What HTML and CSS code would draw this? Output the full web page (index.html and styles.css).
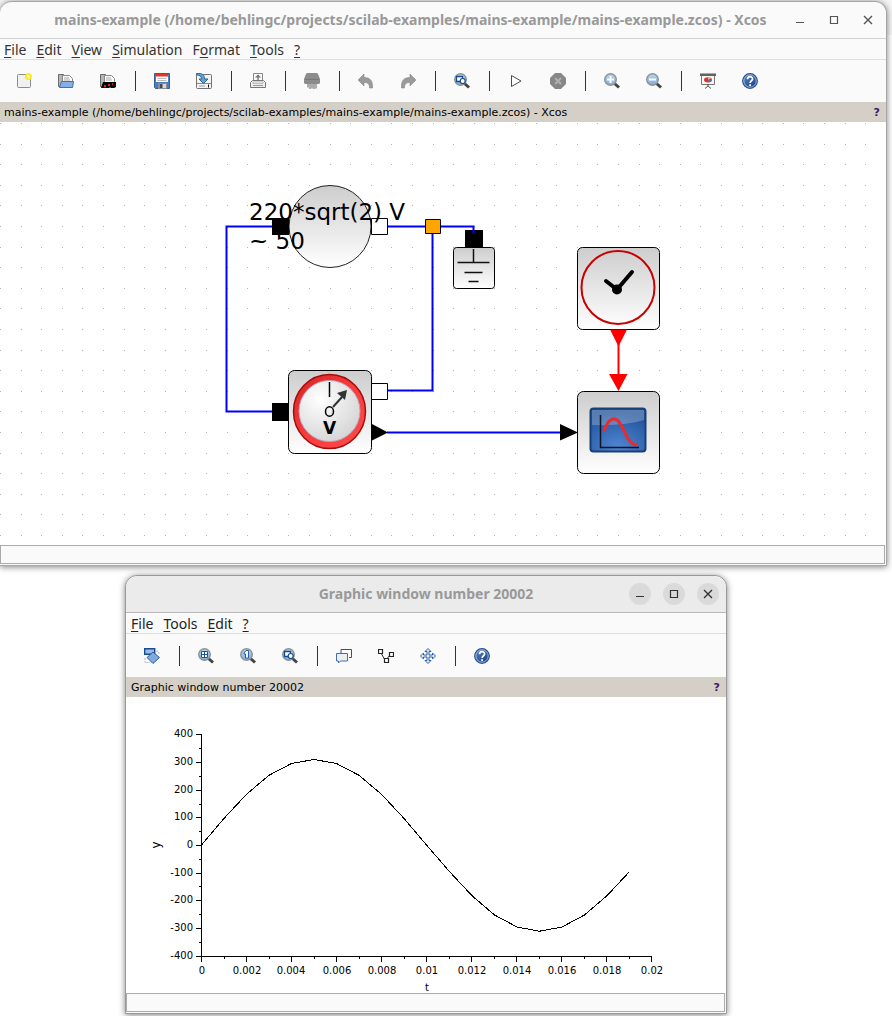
FILE: index.html
```html
<!DOCTYPE html>
<html lang="en">
<head>
<meta charset="utf-8">
<meta name="viewport" content="width=device-width, initial-scale=1">
<title>Xcos mains example</title>
<link rel="stylesheet" href="styles.css">
</head>
<body>
<svg class="sprite" aria-hidden="true">
  <defs>
    <linearGradient id="glass" x1="0" y1="0" x2="0" y2="1"><stop offset="0" stop-color="#b9d3f3"/><stop offset="1" stop-color="#82abde"/></linearGradient>
    <linearGradient id="navy" x1="0" y1="0" x2="1" y2="1"><stop offset="0" stop-color="#5d87c4"/><stop offset="1" stop-color="#123a7d"/></linearGradient>
    <linearGradient id="metal" x1="0" y1="0" x2="0" y2="1"><stop offset="0" stop-color="#cdcdcd"/><stop offset="1" stop-color="#ffffff"/></linearGradient>
  </defs>
  <symbol id="i-new" viewBox="0 0 16 16"><rect x="1.5" y="1.5" width="13" height="13" rx="1" fill="#f1f1f1" stroke="#8c8c8c"/><circle cx="12.5" cy="3.5" r="3.5" fill="#fbea2c"/><circle cx="12.500" cy="3.500" r="1.400" fill="#fffccb"/></symbol>
  <symbol id="i-open" viewBox="0 0 16 16"><path d="M.5 13.500V1.500h5l1 1.500h2v10z" fill="#b5b5b5" stroke="#6c6c6c"/><path d="M4.500 2.500h7l3 3v6h-10z" fill="#fafafa" stroke="#888"/><path d="M6 5h5M6 7h6" stroke="#aaa"/><path d="M3.500 8.500h12l-1 6h-13z" fill="#84b0e3" stroke="#3f70b2"/></symbol>
  <symbol id="i-opensci" viewBox="0 0 16 16"><path d="M.5 13.500V1.500h5l1 1.500h2v10z" fill="#b5b5b5" stroke="#6c6c6c"/><path d="M4.500 2.500h7l3 3v6h-10z" fill="#fafafa" stroke="#888"/><path d="M6 5h5M6 7h6" stroke="#aaa"/><path d="M3 9h13v5l-2 1H1z" fill="#000"/><path d="M4 12h2v2H4zM8 11h2v2H8zM12 10h1v2h-1zM9 14h2v1H9z" fill="#e81e1e"/></symbol>
  <symbol id="i-save" viewBox="0 0 16 16"><path d="M.5.500h15v15h-14l-1-1z" fill="#4a7dc0" stroke="#355f9b"/><path d="M2 1h12v8H2z" fill="#fff"/><path d="M2 1h12v2.500H2z" fill="#e33426"/><path d="M3.500 5.500h9M3.500 7.500h9" stroke="#b9bec5"/><path d="M4 10h9v6H4z" fill="#8b8f94"/><path d="M6 11h2v4H6z" fill="#45494e"/><path d="M9 11h3v4H9z" fill="#d8d8d8"/></symbol>
  <symbol id="i-import" viewBox="0 0 16 16"><rect x=".5" y="1.500" width="15" height="14" rx="1" fill="#f4f4f4" stroke="#737373"/><path d="M1 10.500h14" stroke="#8a8a8a"/><path d="M3 13h6" stroke="#9a9a9a"/><path d="M12.500 11.500v3" stroke="#111"/><path d="M.5.500c6-.5 8 1.500 8 5.500h3.500L7.500 10.500 3 6h2.500C5.500 3.500 4 2 .5 2z" fill="#66a3d1" stroke="#2c658f"/></symbol>
  <symbol id="i-print" viewBox="0 0 16 16"><path d="M3.500 9.500v-9h9v9" fill="#f8f8f8" stroke="#8a8a8a"/><path d="M8 2v5" stroke="#777" stroke-width="1.400"/><path d="M5 4.500L8 1.500l3 3z" fill="#777"/><path d="M.5 14.500v-5l2-2h11l2 2v5z" fill="#eee" stroke="#777"/><path d="M3 9h10v1.500H3z" fill="#fff" stroke="#999" stroke-width=".6"/><path d="M3 12.500h10" stroke="#999"/></symbol>
  <symbol id="i-shred" viewBox="0 0 16 16"><path d="M2 1l1-1h10l1 1 2 5v4l-1 1H1l-1-1V6z" fill="#8c8c8c"/><path d="M1 6.500h14" stroke="#777"/><path d="M4 11v3.500M6 11v5M8 11v4.500M10 11v5M12 11v4.500" stroke="#939393" stroke-width="1.500"/></symbol>
  <symbol id="i-undo" viewBox="0 0 16 16"><path d="M6 1v3.500c6 0 9 3 8.500 10.500h-3c0-4-1.500-5.500-5.500-5.500V13L0 7z" fill="#9a9a9a" stroke="#868686" stroke-width=".6"/></symbol>
  <symbol id="i-redo" viewBox="0 0 16 16"><path d="M10 1v3.500C4 4.500 1 7.500 1.500 15h3c0-4 1.500-5.500 5.500-5.500V13l6-6z" fill="#9a9a9a" stroke="#868686" stroke-width=".6"/></symbol>
  <symbol id="i-lens" viewBox="0 0 16 16"><path d="M10.500 10.500l4.500 4" stroke="#3f4541" stroke-width="3"/><circle cx="6.500" cy="6.500" r="5.800" fill="url(#glass)" stroke="#8c958f" stroke-width="1.400"/></symbol>
  <symbol id="i-fit" viewBox="0 0 16 16"><use href="#i-lens"/><path d="M2.500 3.500h6v5h-6z" fill="#fff" stroke="#164a94" stroke-width="1.300"/><circle cx="8.700" cy="8" r="2.500" fill="#fff" stroke="#164a94" stroke-width="1.200"/></symbol>
  <symbol id="i-in" viewBox="0 0 16 16"><use href="#i-lens"/><path d="M3 6.500h7M6.500 3v7" stroke="#fff" stroke-width="2"/></symbol>
  <symbol id="i-out" viewBox="0 0 16 16"><use href="#i-lens"/><path d="M3 6.500h7" stroke="#fff" stroke-width="2"/></symbol>
  <symbol id="i-grid" viewBox="0 0 16 16"><use href="#i-lens"/><path d="M3 3h7v7H3z" fill="#fff"/><path d="M3.500 3.500h6v6h-6zM3 6.500h7M6.500 3v7" fill="none" stroke="#1d5296"/></symbol>
  <symbol id="i-one" viewBox="0 0 16 16"><use href="#i-lens"/><path d="M4 5l2-2.500h2.500V10H5.500V6H4z" fill="#fff" stroke="#1d5296" stroke-width=".9"/></symbol>
  <symbol id="i-play" viewBox="0 0 16 16"><path d="M3.500 2.500L13 8l-9.500 5.500z" fill="#fff" stroke="#4c4c4c"/></symbol>
  <symbol id="i-stop" viewBox="0 0 16 16"><path d="M5 0h6l5 5v6l-5 5H5l-5-5V5z" fill="#878787"/><path d="M5 5l6 6M11 5l-6 6" stroke="#b0b0b0" stroke-width="2"/></symbol>
  <symbol id="i-board" viewBox="0 0 16 16"><path d="M1.500 2v9.500h13V2" fill="#f7f7f7" stroke="#777"/><path d="M0 .500h16V3H0z" fill="#60635d"/><path d="M8 11v2M5 15.500L8 13l3 2.500" fill="none" stroke="#555"/><ellipse cx="8" cy="6.800" rx="4" ry="2.600" fill="#e2332b"/><path d="M8 6.800h4a4 2.600 0 0 1-3 2.500z" fill="#4d78b8"/><path d="M8 6.800V4.200a4 2.600 0 0 1 3 1z" fill="#e7b3ad"/></symbol>
  <symbol id="i-help" viewBox="0 0 16 16"><circle cx="8" cy="8" r="7.300" fill="url(#navy)" stroke="#294f8d" stroke-width="1.200"/><circle cx="8" cy="8" r="6.200" fill="none" stroke="#b8cbea" stroke-width=".8"/><path d="M5.500 6.300C5.500 2.800 10.700 3 10.600 6c0 1.800-2.500 1.800-2.500 4" fill="none" stroke="#fff" stroke-width="1.700"/><path d="M7.200 11.200H9V13H7.200z" fill="#fff"/></symbol>
  <symbol id="i-rotate" viewBox="0 0 16 16"><path d="M.7.700h10v5.600h-10z" fill="#9dbbe5" stroke="#164b96" stroke-width="1.400"/><path d="M12 3c2 0 3 1 3 3M1 10v4.500h5" fill="none" stroke="#a4bad6" stroke-dasharray="2 1"/><path d="M9 4l6.500 5.500L9 15.500 3 9.500z" fill="#83a9dc" stroke="#2a5ca3"/></symbol>
  <symbol id="i-bubbles" viewBox="0 0 16 16"><path d="M5 1.500h10.500v8H13" fill="#fff" stroke="#2158a4"/><path d="M5 1.500v4" stroke="#2158a4"/><path d="M.5 5.500h11v7.500h-7l-2 2v-2h-2z" fill="#eee" stroke="#3f70b3"/></symbol>
  <symbol id="i-nodes" viewBox="0 0 16 16"><path d="M2.500 4l5 9 5-7" fill="none" stroke="#333"/><path d="M.5 1.500h4v4h-4zM6.500 10.500h4v4h-4zM11.500 4.500h4v4h-4z" fill="#fff" stroke="#222" stroke-width="1.200"/></symbol>
  <symbol id="i-move" viewBox="0 0 16 16"><path d="M8 .5l3 3H9V7h3.500V5l3 3-3 3V9H9v3.500h2l-3 3-3-3h2V9H3.500v2l-3-3 3-3v2H7V3.500H5z" fill="#e4edf9" stroke="#2b60a8"/></symbol>
  <symbol id="i-min" viewBox="0 0 16 16"><path d="M4 10.500h8" stroke="currentColor"/></symbol>
  <symbol id="i-max" viewBox="0 0 16 16"><path d="M4.500 4.500h7v7h-7z" fill="none" stroke="currentColor" stroke-width="1.200"/></symbol>
  <symbol id="i-close" viewBox="0 0 16 16"><path d="M4 4l8 8M12 4l-8 8" stroke="currentColor" stroke-width="1.400"/></symbol>
</svg>

<main class="desktop">
<section class="window window--editor" aria-label="Xcos editor">
  <header class="titlebar">
    <h1 class="title">mains-example (/home/behlingc/projects/scilab-examples/mains-example/mains-example.zcos) - Xcos</h1>
    <div class="controls">
      <button class="control" aria-label="Minimize"><svg class="icon"><use href="#i-min"/></svg></button>
      <button class="control" aria-label="Maximize"><svg class="icon"><use href="#i-max"/></svg></button>
      <button class="control" aria-label="Close"><svg class="icon"><use href="#i-close"/></svg></button>
    </div>
  </header>
  <nav class="menubar">
    <button class="menu"><u>F</u>ile</button>
    <button class="menu"><u>E</u>dit</button>
    <button class="menu"><u>V</u>iew</button>
    <button class="menu"><u>S</u>imulation</button>
    <button class="menu">F<u>o</u>rmat</button>
    <button class="menu"><u>T</u>ools</button>
    <button class="menu"><u>?</u></button>
  </nav>
  <div class="toolbar" role="toolbar" aria-label="Editor tools">
    <button class="tool" aria-label="New"><svg class="icon"><use href="#i-new"/></svg></button>
    <button class="tool" aria-label="Open"><svg class="icon"><use href="#i-open"/></svg></button>
    <button class="tool" aria-label="Open in Scilab"><svg class="icon"><use href="#i-opensci"/></svg></button>
    <span class="separator"></span>
    <button class="tool" aria-label="Save"><svg class="icon"><use href="#i-save"/></svg></button>
    <button class="tool" aria-label="Save as"><svg class="icon"><use href="#i-import"/></svg></button>
    <span class="separator"></span>
    <button class="tool" aria-label="Print"><svg class="icon"><use href="#i-print"/></svg></button>
    <span class="separator"></span>
    <button class="tool" aria-label="Delete"><svg class="icon"><use href="#i-shred"/></svg></button>
    <span class="separator"></span>
    <button class="tool" aria-label="Undo"><svg class="icon"><use href="#i-undo"/></svg></button>
    <button class="tool" aria-label="Redo"><svg class="icon"><use href="#i-redo"/></svg></button>
    <span class="separator"></span>
    <button class="tool" aria-label="Fit diagram"><svg class="icon"><use href="#i-fit"/></svg></button>
    <span class="separator"></span>
    <button class="tool" aria-label="Start"><svg class="icon"><use href="#i-play"/></svg></button>
    <button class="tool" aria-label="Stop"><svg class="icon"><use href="#i-stop"/></svg></button>
    <span class="separator"></span>
    <button class="tool" aria-label="Zoom in"><svg class="icon"><use href="#i-in"/></svg></button>
    <button class="tool" aria-label="Zoom out"><svg class="icon"><use href="#i-out"/></svg></button>
    <span class="separator"></span>
    <button class="tool" aria-label="Demonstrations"><svg class="icon"><use href="#i-board"/></svg></button>
    <button class="tool" aria-label="Help"><svg class="icon"><use href="#i-help"/></svg></button>
  </div>
  <div class="infobar">
    <span>mains-example (/home/behlingc/projects/scilab-examples/mains-example/mains-example.zcos) - Xcos</span>
    <button class="infohelp">?</button>
  </div>
  <svg class="diagram" viewBox="0 122 886 423" preserveAspectRatio="xMinYMin slice" role="img" aria-label="Mains example block diagram">
    <defs>
      <!-- 103px tile holds five 20.6px grid steps, snapped to whole pixels -->
      <path id="dots" d="M0 0h1v1H0zM21 0h1v1h-1zM41 0h1v1h-1zM62 0h1v1h-1zM82 0h1v1h-1z"/>
      <pattern id="grid" x="0" y="123" width="103" height="103" patternUnits="userSpaceOnUse">
        <g fill="#b5b5b5"><use href="#dots"/><use href="#dots" y="21"/><use href="#dots" y="41"/><use href="#dots" y="62"/><use href="#dots" y="82"/></g>
      </pattern>
      <radialGradient id="dial" cx=".35" cy=".3" r=".8"><stop offset="0" stop-color="#fff"/><stop offset="1" stop-color="#d2d2d2"/></radialGradient>
      <radialGradient id="screen" cx=".5" cy=".9" r=".8"><stop offset="0" stop-color="#4f86d3"/><stop offset="1" stop-color="#23559c"/></radialGradient>
      <linearGradient id="ring" x1="0" y1="0" x2="1" y2="1"><stop offset="0" stop-color="#d92222"/><stop offset=".5" stop-color="#f83d3d"/><stop offset="1" stop-color="#ff4b4b"/></linearGradient>
    </defs>
    <rect y="122" width="886" height="423" fill="url(#grid)"/>
    <g fill="none" stroke="#00f" stroke-width="2">
      <path d="M273 226.500H226.500V411.500H273"/>
      <path d="M387 226.500H433M432.500 234V390.500H387"/>
      <path d="M387 432.500H562"/>
    </g>
    <circle cx="330" cy="226.500" r="41" fill="url(#metal)" stroke="#222"/>
    <path d="M272 218h17v17h-17z"/>
    <path d="M371.500 218.500h16v16h-16z" fill="#fff" stroke="#000"/>
    <text class="blocktext" x="249" y="220">220*sqrt(2) V</text>
    <text class="blocktext" x="249" y="249">~ 50</text>

    <path d="M465 230h18v18h-18z"/>
    <path d="M440 226.500h33.500v7.500" fill="none" stroke="#00f" stroke-width="2"/>
    <path d="M425.500 219.500h15v14h-15z" fill="#ffa500" stroke="#000"/>
    <rect x="453.500" y="247.500" width="41" height="41" rx="3" fill="url(#metal)" stroke="#000"/>
    <path d="M473.500 249v13.500M457.500 262.500h32M464.500 272.500h18M468.500 281.500h10" stroke="#111" stroke-width="1.500" fill="none"/>

    <rect x="288.500" y="370.500" width="83" height="83" rx="6" fill="url(#metal)" stroke="#000"/>
    <ellipse cx="329.500" cy="411.500" rx="36" ry="37" fill="url(#ring)" stroke="#a50d0d" stroke-width="1.500"/>
    <circle cx="329.500" cy="411" r="30.500" fill="url(#dial)" stroke="#b7aac0"/>
    <path d="M329.500 382v15" stroke="#000" stroke-width="1.500"/>
    <ellipse cx="329.500" cy="411.500" rx="4" ry="4.800" fill="none" stroke="#000" stroke-width="1.500"/>
    <path d="M333 407l9-10" stroke="#2e3436" stroke-width="2"/>
    <path d="M347 390l-2 10-8-7z" fill="#2e3436"/>
    <text class="voltmark" x="329.500" y="434">V</text>
    <path d="M272 403h16v18h-16zM372 424l16 8.500-16 8z"/>
    <path d="M371.500 383.500h16v16h-16z" fill="#fff" stroke="#000"/>
    <path d="M379 390.500h10" stroke="#00f" stroke-width="2" opacity="0"/>
    <path d="M560 424l18 8.500-18 8z"/>

    <rect x="577.500" y="247.500" width="82" height="82" rx="5" fill="url(#metal)" stroke="#000"/>
    <circle cx="618" cy="287.500" r="36.500" fill="none" stroke="#c80000" stroke-width="2"/>
    <path d="M606 281l11 8.500 15-17.500" fill="none" stroke="#000" stroke-width="4" stroke-linecap="round"/>
    <circle cx="617" cy="289.500" r="5"/>
    <path d="M618.500 344v32" stroke="#f00" stroke-width="2"/>
    <path d="M610 329.500h17l-8.500 17zM609 374h18.500l-9 17z" fill="#f00"/>

    <rect x="577.500" y="391.500" width="82" height="82" rx="6" fill="url(#metal)" stroke="#000"/>
    <rect x="590.500" y="408.500" width="55" height="43" rx="3" fill="url(#screen)" stroke="#193f77" stroke-width="2"/>
    <path d="M592 410h52v10q-18 6-52 5z" fill="#fff" opacity=".24"/>
    <path d="M600.500 415v32.500H639" fill="none" stroke="#0b1426" stroke-width="1.500"/>
    <path d="M604 431c4-12 11-17 17-6s8 20 17 20" fill="none" stroke="#ee2929" stroke-width="3"/>
  </svg>
  <footer class="statusbar"></footer>
</section>

<section class="window window--plot" aria-label="Graphic window">
  <header class="titlebar titlebar--grey">
    <h2 class="title">Graphic window number 20002</h2>
    <div class="controls">
      <button class="control" aria-label="Minimize"><svg class="icon"><use href="#i-min"/></svg></button>
      <button class="control" aria-label="Maximize"><svg class="icon"><use href="#i-max"/></svg></button>
      <button class="control" aria-label="Close"><svg class="icon"><use href="#i-close"/></svg></button>
    </div>
  </header>
  <nav class="menubar">
    <button class="menu"><u>F</u>ile</button>
    <button class="menu"><u>T</u>ools</button>
    <button class="menu"><u>E</u>dit</button>
    <button class="menu"><u>?</u></button>
  </nav>
  <div class="toolbar" role="toolbar" aria-label="Plot tools">
    <button class="tool" aria-label="Rotate"><svg class="icon"><use href="#i-rotate"/></svg></button>
    <span class="separator"></span>
    <button class="tool" aria-label="Zoom area"><svg class="icon"><use href="#i-grid"/></svg></button>
    <button class="tool" aria-label="Original view"><svg class="icon"><use href="#i-one"/></svg></button>
    <button class="tool" aria-label="Fit view"><svg class="icon"><use href="#i-fit"/></svg></button>
    <span class="separator"></span>
    <button class="tool" aria-label="Datatips"><svg class="icon"><use href="#i-bubbles"/></svg></button>
    <button class="tool" aria-label="Edit curve"><svg class="icon"><use href="#i-nodes"/></svg></button>
    <button class="tool" aria-label="Move"><svg class="icon"><use href="#i-move"/></svg></button>
    <span class="separator"></span>
    <button class="tool" aria-label="Help"><svg class="icon"><use href="#i-help"/></svg></button>
  </div>
  <div class="infobar">
    <span>Graphic window number 20002</span>
    <button class="infohelp">?</button>
  </div>
  <svg class="plot" viewBox="126 697 600 296" role="img" aria-label="Voltage y over time t">
    <g fill="none" stroke="#000" shape-rendering="crispEdges">
      <path d="M201.500 734V956.500H652"/>
      <path d="M196 734.500h6M196 762.500h6M196 790.500h6M196 817.500h6M196 845.500h6M196 873.500h6M196 900.500h6M196 928.500h6M196 956.500h6"/>
      <path d="M199 748.500h3M199 776.500h3M199 804.500h3M199 831.500h3M199 859.500h3M199 886.500h3M199 914.500h3M199 942.500h3"/>
      <path d="M201.500 957v5M246.500 957v5M291.500 957v5M336.500 957v5M381.500 957v5M426.500 957v5M471.500 957v5M516.500 957v5M561.500 957v5M606.500 957v5M651.500 957v5"/>
      <path d="M224.500 957v2M269.500 957v2M314.500 957v2M359.500 957v2M404.500 957v2M449.500 957v2M494.500 957v2M539.500 957v2M584.500 957v2M629.500 957v2"/>
      <polyline points="201.500,845 224,818.400 246.500,794.300 269,775.300 291.500,763.500 314,759.500 336.500,763.500 359,775.300 381.500,794.300 404,818.400 426.500,845 449.500,871.600 472,895.700 494.500,915 517,927 539.500,931.200 562,927 584.500,915 607,895.700 629.500,871.600"/>
    </g>
    <g class="ticks ticks--y">
      <text x="193" y="737">400</text><text x="193" y="765">300</text><text x="193" y="793">200</text><text x="193" y="820">100</text><text x="193" y="848">0</text><text x="193" y="876">-100</text><text x="193" y="903">-200</text><text x="193" y="931">-300</text><text x="193" y="959">-400</text>
    </g>
    <g class="ticks">
      <text x="202" y="974">0</text><text x="247" y="974">0.002</text><text x="291" y="974">0.004</text><text x="337" y="974">0.006</text><text x="382" y="974">0.008</text><text x="427" y="974">0.01</text><text x="472" y="974">0.012</text><text x="517" y="974">0.014</text><text x="562" y="974">0.016</text><text x="607" y="974">0.018</text><text x="652" y="974">0.02</text>
      <text x="427" y="991">t</text>
      <text class="ylabel" transform="translate(160 845) rotate(-90)">y</text>
    </g>
  </svg>
  <footer class="statusbar"></footer>
</section>
</main>
</body>
</html>
```

FILE: styles.css
```css
* { box-sizing: border-box; }

body {
  margin: 0;
  background: #fff;
  color: #333;
  font-family: "Noto Sans", sans-serif;
}

button {
  margin: 0;
  padding: 0;
  border: 0;
  background: none;
  color: inherit;
  font: inherit;
}

.sprite { position: absolute; width: 0; height: 0; }

.desktop {
  display: flex;
  flex-direction: column;
  gap: 9px;
  padding-top: 1px;
  padding-bottom: 2px;
  background: linear-gradient(#f5f5f5, #f5f5f5) 0 0 / 100% 35px no-repeat;
  overflow: hidden;
}

.window {
  border: 1px solid #a6a6a6;
  border-radius: 12px 12px 0 0;
  background: #fafafa;
  box-shadow: 0 1px 6px rgba(0, 0, 0, 0.5);
}

.window--editor {
  margin-right: 5px;
  border-left: 0;
}

.window--plot {
  margin-left: 125px;
  margin-right: 165px;
  border-color: #999;
}

.titlebar {
  display: flex;
  align-items: center;
  height: 37px;
  padding-right: 7px;
  border-bottom: 1px solid #d2d2d2;
  border-radius: 12px 12px 0 0;
  color: #555;
}

.titlebar--grey {
  border-bottom-color: #b9b9b9;
  background: #ebebeb;
  color: #333;
}

.title {
  flex: 1;
  margin: 0;
  padding-left: 32px;
  overflow: hidden;
  color: #999;
  font-size: 14px;
  font-weight: 700;
  line-height: 20px;
  text-align: center;
  white-space: nowrap;
}

.titlebar--grey .title { padding-left: 97px; }

.controls { display: flex; gap: 12px; }

.control {
  display: grid;
  place-items: center;
  width: 22px;
  height: 22px;
  border-radius: 50%;
}

.titlebar--grey .control { background: #dadada; }

.icon { display: block; width: 16px; height: 16px; }

.menubar {
  display: flex;
  gap: 10px;
  height: 21px;
  padding-left: 4px;
  border-bottom: 1px solid #dedede;
  font-size: 14px;
  line-height: 22px;
}

.window--plot .menubar { padding-left: 5px; color: #222; }

.menu u {
  text-decoration-thickness: 1px;
  text-underline-offset: 2px;
}

.toolbar {
  display: flex;
  align-items: center;
  height: 42px;
  padding-left: 3px;
}

.window--plot .toolbar { height: 43px; padding-left: 5px; }

.tool {
  display: grid;
  place-items: center;
  width: 42px;
  height: 32px;
}

.separator {
  width: 12px;
  height: 20px;
  background: linear-gradient(#333, #333) center / 1px 100% no-repeat;
}

.infobar {
  display: flex;
  justify-content: space-between;
  align-items: center;
  height: 20px;
  padding: 0 6px 0 4px;
  background: #d4d0c8;
  color: #000;
  font-family: "DejaVu Sans", sans-serif;
  font-size: 11px;
  white-space: nowrap;
}

.window--plot .infobar { padding-left: 5px; }

.infohelp {
  color: #3b1a68;
  font-size: 11px;
  font-weight: 700;
}

.diagram, .plot {
  display: block;
  width: 100%;
  background: #fff;
}

.blocktext {
  font-family: "DejaVu Sans", sans-serif;
  font-size: 23px;
}

.voltmark {
  font-family: "DejaVu Sans", sans-serif;
  font-size: 17px;
  font-weight: 700;
  text-anchor: middle;
}

.ticks {
  fill: #000;
  font-family: "DejaVu Sans", sans-serif;
  font-size: 10px;
  text-anchor: middle;
}

.ticks--y { text-anchor: end; }

.ylabel { font-size: 12px; }

.statusbar {
  height: 19px;
  margin: 0 1px 1px 0;
  border: 1px solid #aaa;
}
```
